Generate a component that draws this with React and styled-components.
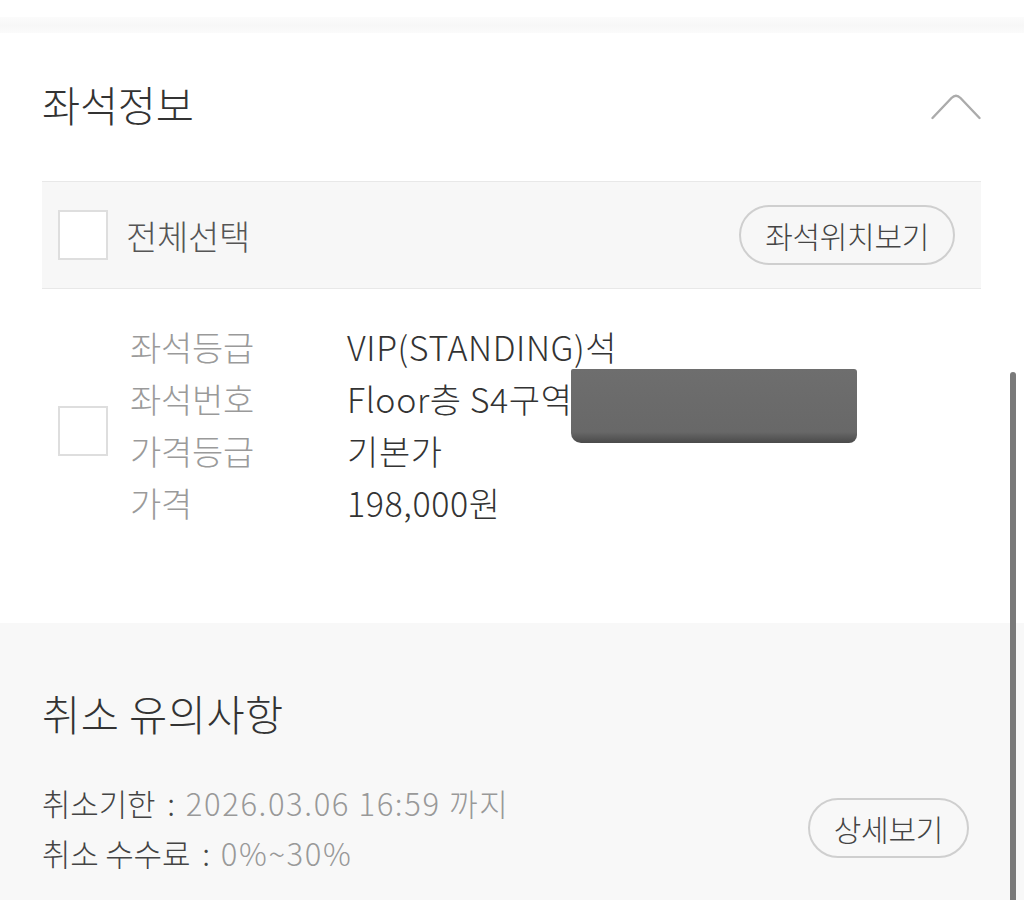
import React from "react";
import styled, { createGlobalStyle } from "styled-components";

const Global = createGlobalStyle`
  html, body { margin: 0; padding: 0; background: #fff; }
  body { font-family: "Noto Sans CJK KR", "Noto Sans", sans-serif; color: #333; }
`;

const Page = styled.div`
  position: relative;
  width: 1024px;
  height: 900px;
  overflow: hidden;
  background: #fff;
`;

const TopGap = styled.div`
  height: 17px;
  background: #fff;
`;

const Band = styled.div`
  height: 16px;
  background: linear-gradient(#fbfbfb, #f7f7f7 50%, #fbfbfb);
`;

const Section = styled.section`
  background: ${(p) => (p.$grey ? "#f8f8f8" : "#fff")};
  padding: ${(p) => p.$pad};
`;

const TitleRow = styled.div`
  display: flex;
  align-items: center;
  justify-content: space-between;
  height: 50px;
`;

const Title = styled.h2`
  margin: 0;
  font-size: 41.5px;
  line-height: 50px;
  font-weight: 300;
  color: #333;
  letter-spacing: ${(p) => p.$ls || "-0.3px"};
`;

const Chevron = styled.svg`
  width: 50px;
  height: 28px;
  margin-top: 4px;
`;

const HeaderRow = styled.div`
  margin-top: 52px;
  height: 106px;
  border-top: 1px solid #e8e8e8;
  border-bottom: 1px solid #e8e8e8;
  background: #f7f7f7;
  display: flex;
  align-items: center;
  padding: 0 26px 0 16px;
`;

const Box = styled.span`
  display: block;
  flex: none;
  box-sizing: border-box;
  width: 50px;
  height: 50px;
  background: #fff;
  border: 2px solid #dedede;
  margin-top: ${(p) => p.$mt || 0}px;
`;

const HeaderLabel = styled.span`
  margin-left: 18px;
  font-size: 34px;
  font-weight: 300;
  color: #555;
  flex: 1;
  letter-spacing: -0.3px;
`;

const Pill = styled.button`
  font-family: inherit;
  font-weight: 300;
  height: 60px;
  padding: 0 24px;
  border: 2px solid #cfcfcf;
  border-radius: 30px;
  background: ${(p) => (p.$grey ? "#f8f8f8" : "#f7f7f7")};
  color: #444;
  font-size: 30px;
  letter-spacing: -0.3px;
  margin-right: ${(p) => p.$mr || 0}px;
`;

const Item = styled.div`
  display: flex;
  align-items: flex-start;
  padding: 32px 0 0 16px;
`;

const Grid = styled.div`
  margin-left: 22px;
  display: grid;
  grid-template-columns: 217px auto;
  font-size: 34px;
  font-weight: 300;
  line-height: 52px;
  letter-spacing: -0.3px;
`;

const Label = styled.span`
  color: #9a9a9a;
`;

const Value = styled.span`
  position: relative;
  color: #333;
  letter-spacing: 0.6px;
`;

const Redact = styled.span`
  position: absolute;
  left: 224px;
  top: -4px;
  width: 286px;
  height: 74px;
  border-radius: 2px 3px 8px 10px;
  background: linear-gradient(#6e6e6e, #686868 85%, #4a4a4a 100%);
`;

const InfoRow = styled.div`
  margin-top: 40px;
  display: flex;
  align-items: center;
  justify-content: space-between;
`;

const Lines = styled.div`
  font-size: 31px;
  font-weight: 300;
  line-height: 50px;
  letter-spacing: -0.2px;
`;

const Line = styled.div`
  color: #444;
`;

const Colon = styled.span`
  display: inline-block;
  margin: 0 11px 0 12px;
`;

const Muted = styled.span`
  color: #999;
  letter-spacing: 1.6px;
`;

const Scroll = styled.div`
  position: absolute;
  right: 8px;
  top: 372px;
  width: 6px;
  height: 560px;
  border-radius: 3px;
  background: #7a7a7a;
`;

const rows = [
  ["좌석등급", "VIP(STANDING)석"],
  ["좌석번호", "Floor층 S4구역", true],
  ["가격등급", "기본가"],
  ["가격", "198,000원"],
];

export default function App() {
  return (
    <Page>
      <Global />
      <TopGap />
      <Band />
      <Section $pad="46px 43px 94px 42px">
        <TitleRow>
          <Title>좌석정보</Title>
          <Chevron viewBox="0 0 50 28" fill="none">
            <path
              d="M1.5 26 L20.5 6 Q25 1.5 29.5 6 L48.5 26"
              stroke="#ababab"
              strokeWidth="2.4"
              strokeLinecap="round"
              strokeLinejoin="round"
            />
          </Chevron>
        </TitleRow>
        <HeaderRow>
          <Box />
          <HeaderLabel>전체선택</HeaderLabel>
          <Pill>좌석위치보기</Pill>
        </HeaderRow>
        <Item>
          <Box $mt={85} />
          <Grid>
            {rows.map(([l, v, r]) => (
              <React.Fragment key={l}>
                <Label>{l}</Label>
                <Value>
                  {v}
                  {r && <Redact />}
                </Value>
              </React.Fragment>
            ))}
          </Grid>
        </Item>
      </Section>
      <Section $grey $pad="65px 43px 40px 42px">
        <Title $ls="0.5px">취소 유의사항</Title>
        <InfoRow>
          <Lines>
            <Line>
              취소기한<Colon>:</Colon>
              <Muted>2026.03.06 16:59 까지</Muted>
            </Line>
            <Line>
              취소 수수료<Colon>:</Colon>
              <Muted>0%~30%</Muted>
            </Line>
          </Lines>
          <Pill $grey $mr={12}>상세보기</Pill>
        </InfoRow>
      </Section>
      <Scroll />
    </Page>
  );
}
